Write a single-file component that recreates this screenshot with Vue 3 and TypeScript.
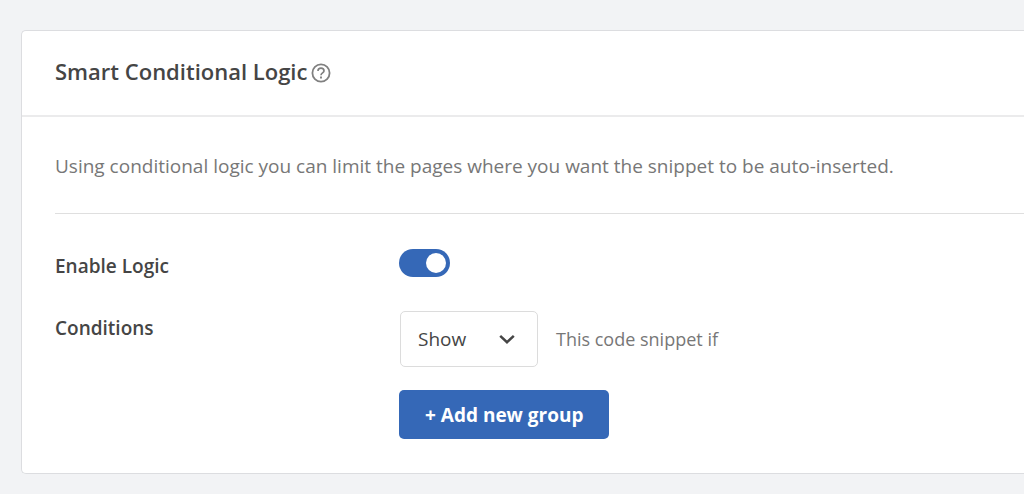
<script setup lang="ts">
import { ref } from 'vue'

const enabled = ref(true)
const action = ref('show')
</script>

<template>
  <main class="page">
    <section class="card" aria-labelledby="card-title">
      <header class="card-header">
        <h2 id="card-title">Smart Conditional Logic</h2>
        <button class="help" type="button" aria-label="Help">
          <svg viewBox="0 0 20 20" width="20" height="20" fill="none" stroke="currentColor">
            <circle cx="10" cy="10" r="8.6" stroke-width="1.8" />
            <path d="M7 8.1C7 6.3 8.3 5.2 10 5.2S13 6.3 13 7.9C13 9.8 10 10.1 10 12.2" stroke-width="1.7" />
            <path d="M10 13.6V15.5" stroke-width="1.9" />
          </svg>
        </button>
      </header>
      <div class="card-body">
        <p class="description">
          Using conditional logic you can limit the pages where you want the snippet to be auto-inserted.
        </p>
        <div class="row">
          <label class="row-label" for="enable-logic">Enable Logic</label>
          <input id="enable-logic" v-model="enabled" class="toggle" type="checkbox" role="switch" />
        </div>
        <div class="row conditions">
          <label class="row-label" for="conditions">Conditions</label>
          <div class="controls">
            <div class="rule">
              <span class="select-box">
                <select id="conditions" v-model="action">
                  <option value="show">Show</option>
                  <option value="hide">Hide</option>
                </select>
                <svg class="chevron" viewBox="0 0 16 10" width="16" height="10" fill="none" stroke="currentColor" stroke-width="2.5">
                  <path d="M1.2 1.8L8 8.2L14.8 1.8" />
                </svg>
              </span>
              <span class="hint">This code snippet if</span>
            </div>
            <button class="add" type="button">+ Add new group</button>
          </div>
        </div>
      </div>
    </section>
  </main>
</template>

<style>
body {
  background: #f2f3f5;
}
</style>

<style scoped>
.page,
.page * {
  box-sizing: border-box;
}

.page {
  padding: 30px 0 20px 21px;
  color: #454545;
  font-family: "Open Sans", "Noto Sans", sans-serif;
  font-size: 19px;
  line-height: 28px;
}

.card {
  background: #fff;
  border: 1px solid #dcdde0;
  border-right: 0;
  border-radius: 5px 0 0 5px;
}

.card-header {
  display: flex;
  align-items: center;
  gap: 4px;
  padding: 26px 33px;
  border-bottom: 2px solid #ebebec;
}

h2 {
  margin: 0;
  padding-bottom: 4px;
  font-size: 22px;
  font-weight: 600;
  line-height: 28px;
}

.help {
  display: flex;
  padding: 0;
  border: 0;
  background: none;
  color: #808080;
  cursor: pointer;
}

.card-body {
  padding: 35px 0 34px 33px;
}

.description {
  margin: 0 0 35px;
  padding-bottom: 33px;
  border-bottom: 1px solid #dfdfdf;
  color: #777;
}

.row {
  display: grid;
  grid-template-columns: 344px 1fr;
  align-items: start;
}

.row-label {
  padding-top: 3px;
  font-weight: 600;
}

.toggle {
  display: flex;
  align-items: center;
  justify-content: flex-end;
  width: 51px;
  height: 28px;
  margin: 0;
  padding: 4px;
  border-radius: 14px;
  background: #8c8f94;
  appearance: none;
  cursor: pointer;
}

.toggle::before {
  width: 20px;
  height: 20px;
  border-radius: 50%;
  background: #fff;
  content: "";
}

.toggle:not(:checked) {
  justify-content: flex-start;
}

.toggle:checked {
  background: #3568b7;
}

.conditions {
  margin-top: 31px;
}

.controls {
  display: flex;
  flex-direction: column;
  align-items: flex-start;
  gap: 23px;
}

.rule {
  display: flex;
  align-items: center;
  gap: 18px;
}

.select-box {
  display: grid;
  align-items: center;
  width: 138px;
  margin-left: 1px;
}

.select-box > * {
  grid-area: 1 / 1;
}

select {
  width: 100%;
  height: 56px;
  padding: 0 17px;
  border: 1px solid #dcdcdc;
  border-radius: 5px;
  background: #fff;
  color: inherit;
  font: inherit;
  appearance: none;
}

.chevron {
  justify-self: end;
  margin-right: 23px;
  pointer-events: none;
}

.hint {
  color: #777;
  font-size: 18px;
}

.add {
  height: 49px;
  padding: 0 26px;
  border: 0;
  border-radius: 5px;
  background: #3568b7;
  color: #fff;
  font: inherit;
  font-weight: 700;
  cursor: pointer;
}
</style>
